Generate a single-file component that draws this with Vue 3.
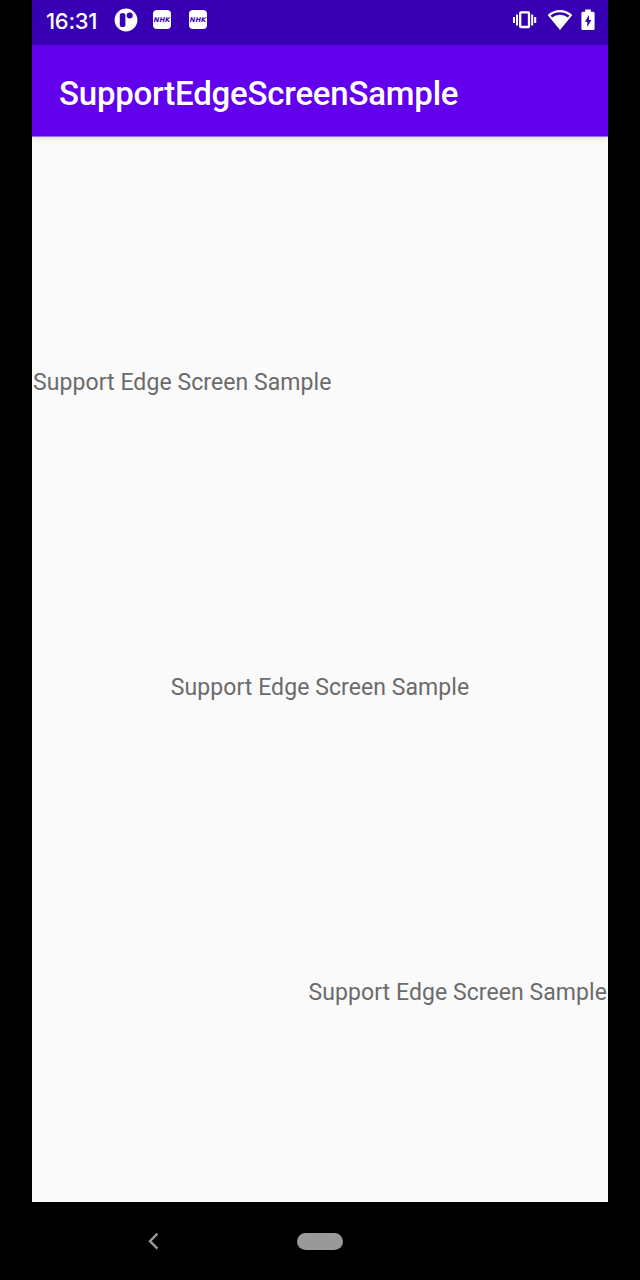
<script setup>
const label = 'Support Edge Screen Sample'
const appTitle = 'SupportEdgeScreenSample'
</script>

<template>
  <div class="device">
    <div class="screen">
      <header class="status">
        <span class="clock">16:31</span>
        <svg class="app-icon" viewBox="0 0 24 24">
          <circle cx="12" cy="12" r="11.4" fill="#fff" />
          <rect x="5.8" y="4.9" width="5.6" height="14.2" rx="2.7" fill="#3700b3" />
          <circle cx="15.7" cy="7.6" r="3" fill="#3700b3" />
        </svg>
        <span class="nhk first"><i>NHK</i></span>
        <span class="nhk"><i>NHK</i></span>
        <svg class="vibrate" viewBox="0 0 24 20">
          <rect x="7.2" y="2.4" width="8.8" height="14.6" rx="0.6" fill="none" stroke="#fff" stroke-width="2.3" />
          <path d="M4 4.4v11M19.2 4.4v11M1 7v6M22.2 7v6" fill="none" stroke="#fff" stroke-width="2" />
        </svg>
        <svg class="wifi" viewBox="0 0 26 22">
          <path d="M.7 5.9C7.8-.6 18.2-.6 25.3 5.9L13 21Z" fill="#fff" />
          <path d="M4.3 7.5c5.2-4 12.2-4 17.4 0" fill="none" stroke="#3700b3" stroke-width="2.4" />
        </svg>
        <svg class="battery" viewBox="0 0 14 22">
          <path d="M4.2 2.7V.5h5.6v2.2h2.3q1.5 0 1.5 1.5v15.3q0 1.5-1.5 1.5H1.9q-1.5 0-1.5-1.5V4.2q0-1.5 1.5-1.5Z" fill="#fff" />
          <path d="M8 6 3.9 12.8h2.4V18l4-7H8Z" fill="#3700b3" />
        </svg>
      </header>
      <div class="appbar"><h1>{{ appTitle }}</h1></div>
      <main class="content">
        <p class="start">{{ label }}</p>
        <p class="middle">{{ label }}</p>
        <p class="end">{{ label }}</p>
      </main>
    </div>
    <nav class="navbar">
      <svg class="back" viewBox="0 0 12 18">
        <path d="M10.4 1.7 3 9.2 10.4 16.7" fill="none" stroke="#999" stroke-width="2.4" />
      </svg>
      <span class="home"></span>
    </nav>
  </div>
</template>

<style>
body { background: #000; }
</style>

<style scoped>
.device {
  width: 640px;
  height: 1280px;
  background: #000;
  overflow: hidden;
  font-family: Roboto, "Liberation Sans", sans-serif;
}
.screen {
  width: 576px;
  height: 1202px;
  margin: 0 32px;
  display: flex;
  flex-direction: column;
  background: #fafafa;
}
.status {
  height: 45px;
  flex: none;
  box-sizing: border-box;
  padding: 0 13px 6px;
  display: flex;
  align-items: center;
  background: #3700b3;
  color: #fff;
}
.clock {
  width: 68px;
  padding: 2px 0 0 1px;
  font: 500 22px/38px Inter, sans-serif;
  letter-spacing: -0.3px;
  white-space: nowrap;
}
.app-icon { width: 24px; height: 24px; }
.nhk {
  width: 18px;
  height: 19px;
  margin-left: 18px;
  border-radius: 4px;
  background: #fff;
  display: flex;
  align-items: center;
  justify-content: center;
}
.nhk.first { margin-left: 15px; }
.nhk i {
  color: #3700b3;
  font: italic 900 6.6px/8px "DejaVu Sans", sans-serif;
  letter-spacing: 0.1px;
}
.vibrate { width: 24px; height: 20px; margin-left: auto; }
.wifi { width: 26px; height: 22px; margin-left: 10px; }
.battery { width: 14px; height: 22px; margin-left: 8px; }
.appbar {
  height: 92px;
  flex: none;
  box-sizing: border-box;
  border-bottom: 1px solid #9770e8;
  padding-left: 27px;
  display: flex;
  align-items: center;
  background: #6200ee;
  box-shadow: 0 1px 5px rgba(0, 0, 0, 0.14);
  clip-path: inset(0 0 -8px 0);
}
.appbar h1 {
  margin: 6px 0 0;
  color: #fff;
  font-size: 33px;
  font-weight: 500;
  line-height: 40px;
  letter-spacing: -0.22px;
}
.content {
  flex: 1;
  padding: 231px 1px 194px;
  display: flex;
  flex-direction: column;
  justify-content: space-between;
}
.content p {
  margin: 0;
  color: #6b6b6b;
  font-size: 23px;
  line-height: 30px;
  letter-spacing: 0.07px;
  white-space: nowrap;
}
.start { align-self: flex-start; }
.middle { align-self: center; }
.end { align-self: flex-end; }
.navbar {
  height: 78px;
  display: flex;
  align-items: center;
}
.back { width: 12px; height: 18px; margin-left: 147px; }
.home {
  width: 46px;
  height: 17px;
  margin-left: 138px;
  border-radius: 9px;
  background: #999;
}
</style>
